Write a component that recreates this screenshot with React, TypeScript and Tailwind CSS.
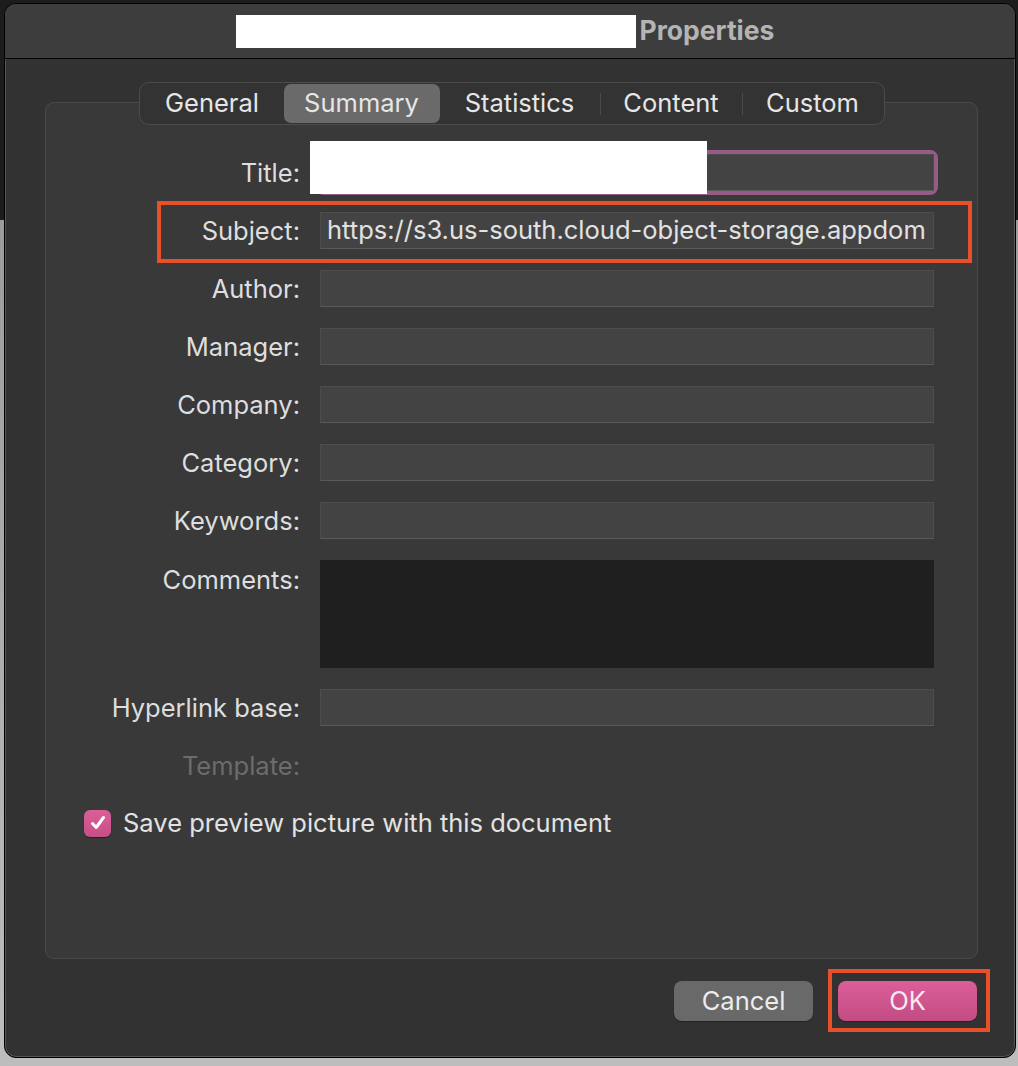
import React from 'react'

const font = { fontFamily: 'Inter, "Noto Sans", sans-serif' }

const fields = ['Author', 'Manager', 'Company', 'Category', 'Keywords']

function Label({ children, muted }: { children: React.ReactNode; muted?: boolean }) {
    return (
        <div className={`w-[254px] shrink-0 text-right text-[25.5px] leading-none ${muted ? 'text-[#6c6c6c]' : 'text-[#dedede]'}`}>
            {children}
        </div>
    )
}

function Field({ children }: { children?: React.ReactNode }) {
    return (
        <div className="h-[37px] w-[614px] flex items-center px-[6px] bg-[#434343] border border-[#4d4d4d] border-b-[#5a5a5a] text-[25.5px] text-[#e2e2e2] overflow-hidden whitespace-nowrap">
            {children}
        </div>
    )
}

function Segmented() {
    const tabs = [
        { label: 'General', w: 'w-[143px]' },
        { label: 'Summary', w: 'w-[156px]', active: true },
        { label: 'Statistics', w: 'w-[160px]' },
        { label: 'Content', w: 'w-[141px]', divider: true },
        { label: 'Custom', w: 'w-[140px]', divider: true },
    ]
    return (
        <div className="relative z-10 self-center flex items-center h-[43px] p-[1px] rounded-[10px] border border-[#4c4c4c] bg-[#333333]">
            {tabs.map((t) => (
                <React.Fragment key={t.label}>
                    {t.divider && <div className="w-px h-[22px] bg-[#4a4a4a]" />}
                    <div
                        className={`${t.w} h-[39px] flex items-center justify-center text-[25.5px] text-[#e6e6e6] rounded-[7px] ${t.active ? 'bg-[#6a6a6a]' : ''}`}
                    >
                        {t.label}
                    </div>
                </React.Fragment>
            ))}
        </div>
    )
}

export default function App() {
    return (
        <div
            style={font}
            className="w-[1018px] h-[1066px] overflow-hidden pt-[3px] pl-[4px] bg-[linear-gradient(to_bottom,#1c1c1c_0px,#1c1c1c_220px,#9c9c9c_220px,#bdbdbd_100%)]"
        >
            <div className="w-[1012px] h-[1055px] rounded-[12px] border border-black bg-[#323232] overflow-hidden flex flex-col shadow-[inset_0_0_0_1px_#555]">
                {/* Title bar */}
                <div className="h-[55px] shrink-0 bg-[#3d3d3d] border-b border-black flex items-center justify-center pr-[10px]">
                    <div className="w-[400px] h-[33px] bg-white" />
                    <span className="ml-[4px] text-[26.5px] font-bold text-[#b4b4b4]">Properties</span>
                </div>

                {/* Body */}
                <div className="flex-1 pl-[40px] pt-[23px]">
                    <div className="w-[933px] flex flex-col">
                        <Segmented />

                        <div className="-mt-[23px] h-[857px] rounded-[9px] border border-[#4a4a4a] bg-[#393939] pt-[51px]">
                            <div className="flex flex-col gap-[21px]">
                                {/* Title */}
                                <div className="flex items-center gap-[20px]">
                                    <Label>Title:</Label>
                                    <div className="relative">
                                        <div className="rounded-[4px] shadow-[0_0_0_4px_#975b88]">
                                            <Field />
                                        </div>
                                        <div className="absolute left-[-10px] top-[-13px] w-[397px] h-[53px] bg-white" />
                                    </div>
                                </div>

                                {/* Subject */}
                                <div className="relative flex items-center gap-[20px]">
                                    <Label>Subject:</Label>
                                    <Field>https://s3.us-south.cloud-object-storage.appdom</Field>
                                    <div className="absolute left-[111px] top-[-11px] w-[815px] h-[62px] border-[4px] border-[#e8502a]" />
                                </div>

                                {fields.map((f) => (
                                    <div key={f} className="flex items-center gap-[20px]">
                                        <Label>{f}:</Label>
                                        <Field />
                                    </div>
                                ))}

                                {/* Comments */}
                                <div className="flex items-start gap-[20px]">
                                    <div className="pt-[7px]">
                                        <Label>Comments:</Label>
                                    </div>
                                    <div className="h-[108px] w-[614px] bg-[#1f1f1f]" />
                                </div>

                                <div className="flex items-center gap-[20px]">
                                    <Label>Hyperlink base:</Label>
                                    <Field />
                                </div>

                                <div className="h-[37px] flex items-center gap-[20px]">
                                    <Label muted>Template:</Label>
                                </div>

                                {/* Checkbox */}
                                <div className="-mt-[1px] pl-[38px] flex items-center gap-[12px]">
                                    <div className="w-[27px] h-[27px] rounded-[6px] bg-[linear-gradient(to_bottom,#db5f98,#c44f86)] flex items-center justify-center shadow-[0_1px_1px_rgba(0,0,0,0.4)]">
                                        <svg width="18" height="18" viewBox="0 0 18 18" fill="none">
                                            <path d="M3.5 9.5 L7.2 13.5 L14.5 3.5" stroke="white" strokeWidth="3" strokeLinecap="round" strokeLinejoin="round" />
                                        </svg>
                                    </div>
                                    <span className="text-[25.5px] text-[#e2e2e2]">Save preview picture with this document</span>
                                </div>
                            </div>
                        </div>

                        {/* Buttons */}
                        <div className="mt-[22px] flex justify-end gap-[25px] pr-[1px]">
                            <button className="w-[139px] h-[40px] rounded-[8px] bg-[#696969] text-[25.5px] text-[#ececec] shadow-[0_1px_1px_rgba(0,0,0,0.3)]">
                                Cancel
                            </button>
                            <div className="relative">
                                <button className="w-[139px] h-[40px] rounded-[8px] bg-[linear-gradient(to_bottom,#dc5e98,#c24c83)] text-[25.5px] text-[#f6eaf0] shadow-[0_1px_1px_rgba(0,0,0,0.3)]">
                                    OK
                                </button>
                                <div className="absolute left-[-10px] top-[-12px] w-[162px] h-[63px] border-[4px] border-[#e8502a]" />
                            </div>
                        </div>
                    </div>
                </div>
            </div>
        </div>
    )
}
